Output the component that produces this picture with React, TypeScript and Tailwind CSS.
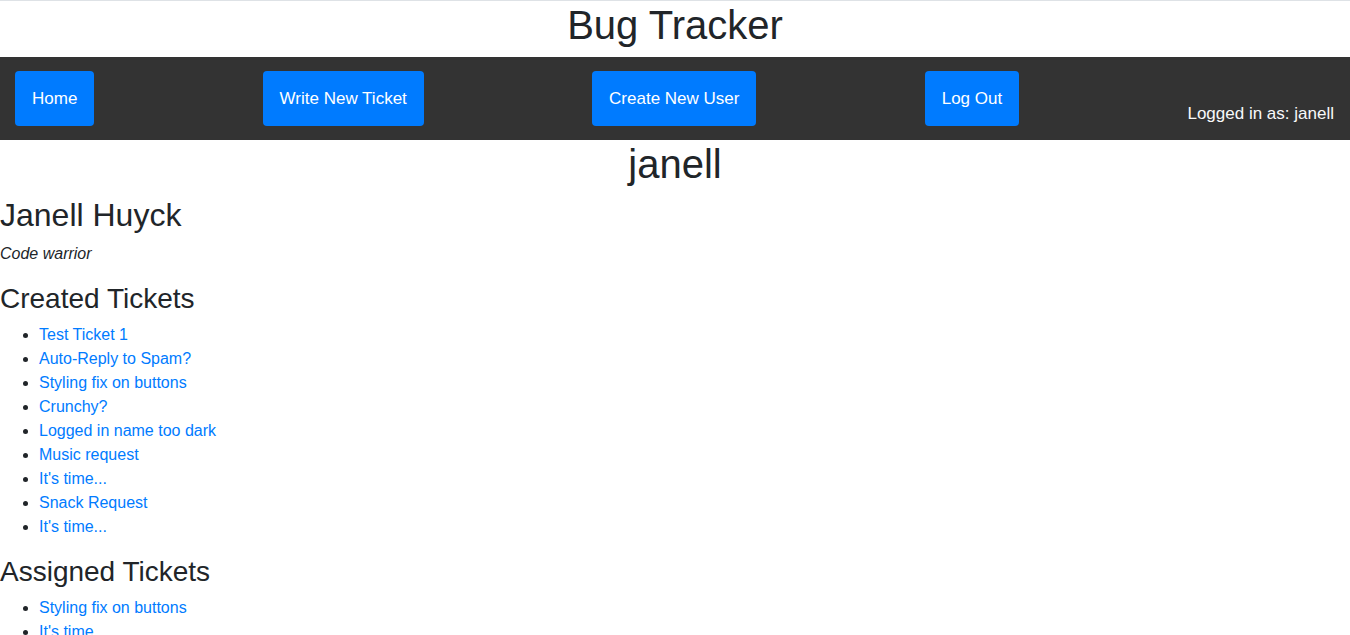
import React from "react";

const created = [
  "Test Ticket 1",
  "Auto-Reply to Spam?",
  "Styling fix on buttons",
  "Crunchy?",
  "Logged in name too dark",
  "Music request",
  "It's time...",
  "Snack Request",
  "It's time...",
];

const assigned = ["Styling fix on buttons", "It's time..."];

function NavButton({ label }: { label: string }) {
  return (
    <a
      href="#"
      className="flex h-[55px] items-center rounded-[4px] bg-[#007bff] px-[17px] text-[17px] leading-6 text-white"
    >
      {label}
    </a>
  );
}

export default function App() {
  return (
    <div
      className="min-h-screen border-t border-[#dee2e6] bg-white text-[16px] leading-6 text-[#212529]"
      style={{ fontFamily: '"Liberation Sans", Arial, sans-serif' }}
    >
      <h1 className="mb-2 text-center text-[40px] leading-[48px]">Bug Tracker</h1>
      <nav className="flex items-start justify-between bg-[#333333] py-[14px] pl-[15px] pr-[16px]">
        <NavButton label="Home" />
        <NavButton label="Write New Ticket" />
        <NavButton label="Create New User" />
        <NavButton label="Log Out" />
        <span className="self-end text-[17px] text-[#f8f9fa]">Logged in as: janell</span>
      </nav>
      <h1 className="mb-2 text-center text-[40px] leading-[48px]">janell</h1>
      <h2 className="mb-2 text-[32px] leading-[38px]">Janell Huyck</h2>
      <p className="mb-4 italic">Code warrior</p>
      <h3 className="mb-[7px] text-[28px] leading-[34px]">Created Tickets</h3>
      <ul className="mb-4 list-disc pl-[39px]">
        {created.map((t, i) => (
          <li key={i}>
            <a href="#" className="text-[#007bff]">
              {t}
            </a>
          </li>
        ))}
      </ul>
      <h3 className="mb-[7px] text-[28px] leading-[34px]">Assigned Tickets</h3>
      <ul className="mb-4 list-disc pl-[39px]">
        {assigned.map((t, i) => (
          <li key={i}>
            <a href="#" className="text-[#007bff]">
              {t}
            </a>
          </li>
        ))}
      </ul>
    </div>
  );
}
